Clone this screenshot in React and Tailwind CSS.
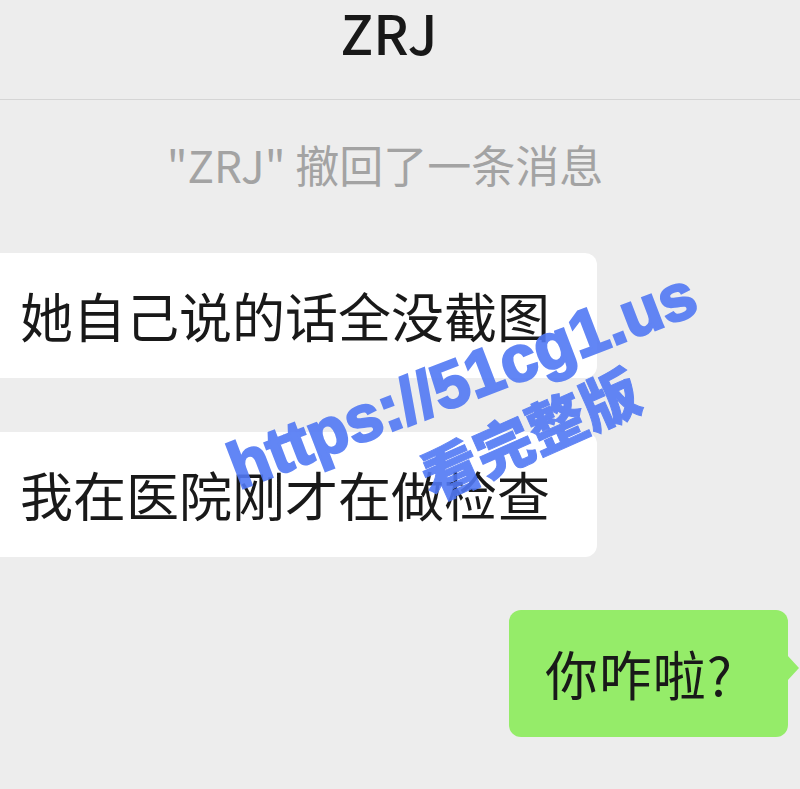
import React from "react";

const CJK = { fontFamily: '"Noto Sans CJK SC", "Noto Sans", sans-serif' };

function Bubble({ children }) {
  return (
    <div className="w-[597px] h-[125px] bg-white rounded-r-[12px] flex items-center pl-[20px] text-[53px] text-[#191919] leading-none">
      {children}
    </div>
  );
}

function MyBubble({ children }) {
  return (
    <div className="flex justify-end pr-[12px]">
      <div className="relative h-[127px] bg-[#95ec69] rounded-[12px] flex items-center pl-[36px] pr-[55px] text-[53px] text-[#191919] leading-none tracking-[1px]">
        {children}
        <svg className="absolute -right-[12px] top-[45px]" width="13" height="26" viewBox="0 0 13 26">
          <path d="M0 0 L12 13 L0 26 Z" fill="#95ec69" />
        </svg>
      </div>
    </div>
  );
}

export default function App() {
  return (
    <div className="relative w-full h-[789px] bg-[#ededed] overflow-hidden" style={CJK}>
      <div className="h-[100px] border-b border-[#d5d5d5] flex justify-center pr-[22px]">
        <span className="text-[54px] font-medium leading-[64px] text-[#181818]">ZRJ</span>
      </div>

      <div className="mt-[34px] h-[60px] flex items-center justify-center pr-[30px] text-[44px] text-[#a3a3a3] leading-none">
        "ZRJ" 撤回了一条消息
      </div>

      <div className="mt-[59px]">
        <Bubble>她自己说的话全没截图</Bubble>
      </div>
      <div className="mt-[54px]">
        <Bubble>我在医院刚才在做检查</Bubble>
      </div>
      <div className="mt-[53px]">
        <MyBubble>你咋啦?</MyBubble>
      </div>

      {/* watermark */}
      <div
        className="absolute left-[462px] top-[380px] -translate-x-1/2 -translate-y-1/2 -rotate-[21deg] whitespace-nowrap text-[65px] font-black leading-none text-[#5279f4] opacity-90 [-webkit-text-stroke:2.5px_#5279f4]"
        style={{ fontFamily: '"Liberation Sans", Arial, sans-serif' }}
      >
        https://51cg1.us
      </div>
      <div className="absolute left-[529px] top-[432px] -translate-x-1/2 -translate-y-1/2 -rotate-[24deg] whitespace-nowrap text-[58px] font-black leading-none text-[#5279f4] opacity-90 [-webkit-text-stroke:1px_#5279f4]">
        看完整版
      </div>
    </div>
  );
}
